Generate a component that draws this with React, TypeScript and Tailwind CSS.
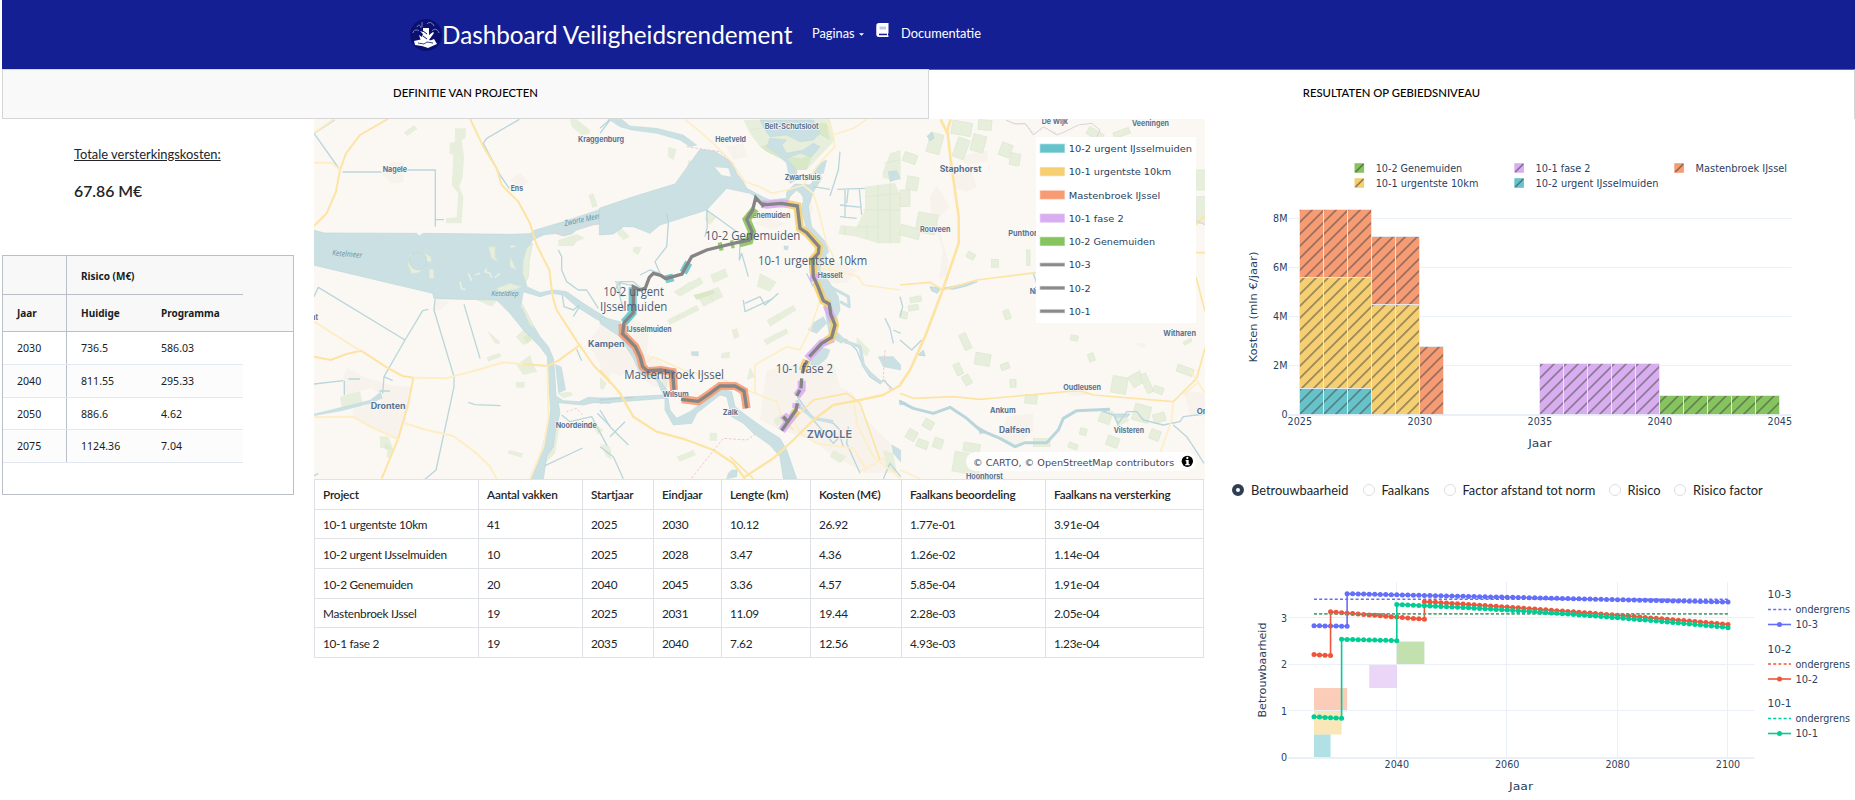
import React from "react";

const INK = "#2a3f5f";
const HATCH_COLORS = { teal: "#65c4cb", yellow: "#f5cf70", orange: "#f79b73", purple: "#d9aef1", green: "#86c45e" };

type LabelProps = {
  x: number;
  y: number;
  size: number;
  len?: number;
  anchor?: "start" | "middle" | "end";
  fill?: string;
  font?: string;
  weight?: number;
  italic?: boolean;
  halo?: number;
  transform?: string;
  children: string;
};

function Label({ x, y, size, len, anchor = "start", fill = INK, font = "DejaVu Sans, sans-serif", weight = 400, italic, halo, transform, children }: LabelProps) {
  return (
    <text
      x={x}
      y={y}
      fontSize={size}
      textLength={len}
      lengthAdjust="spacingAndGlyphs"
      textAnchor={anchor}
      fill={fill}
      fontFamily={font}
      fontWeight={weight}
      fontStyle={italic ? "italic" : undefined}
      stroke={halo ? "#fbf8f3" : undefined}
      strokeWidth={halo}
      paintOrder="stroke"
      strokeLinejoin="round"
      transform={transform}
    >
      {children}
    </text>
  );
}

const WATER = "#cbe0e3";
const CANAL = "#b9d6dc";
const GREEN = "#e7eedb";
const URBAN = "#f7f2eb";
const ROAD = "#fde4a3";
const ROAD2 = "#fdeec6";

/* name, x, y, size, width, in thirds of a pixel */
type Place = [string, number, number, number, number];

const placesWest: Place[] = [
  ["Nagele", 218, 185, 22, 73],
  ["Ens", 602, 244, 22, 37],
  ["Dronten", 182, 896, 25, 105],
  ["Noordeinde", 737, 953, 22, 123],
  ["at", 4, 630, 22, 20],
];
const placesMid: Place[] = [
  ["Kraggenburg", -66, 97, 22, 138],
  ["Kampen", -36, 711, 25, 110],
  ["Heetveld", 346, 96, 22, 92],
  ["Belt-Schutsloot", 494, 56, 22, 162],
  ["Zwartsluis", 554, 211, 22, 107],
  ["Genemuiden", 441, 324, 22, 130],
  ["Hasselt", 653, 505, 22, 75],
  ["IJsselmuiden", 80, 667, 22, 135],
  ["Wilsum", 188, 860, 22, 78],
  ["Zalk", 368, 914, 22, 46],
  ["ZWOLLE", 620, 983, 32, 136],
];
const placesEast: Place[] = [
  ["De Wijk", 425, 41, 22, 79],
  ["Veeningen", 696, 48, 22, 111],
  ["Staphorst", 119, 186, 25, 125],
  ["Rouveen", 60, 366, 22, 91],
  ["Punthorst", 325, 379, 22, 106],
  ["Nieuwleusen", 389, 553, 22, 135],
  ["Witharen", 790, 677, 22, 98],
  ["Oudleusen", 490, 839, 22, 113],
  ["Ankum", 270, 908, 22, 77],
  ["Dalfsen", 297, 969, 25, 94],
  ["Vilsteren", 641, 970, 22, 91],
  ["Ommen", 890, 912, 24, 90],
  ["Hoonhorst", 198, 1108, 22, 111],
];

function Places({ items }: { items: Place[] }) {
  return (
    <>
      {items.map(([name, x, y, size, len]) => (
        <Label key={name} x={x} y={y} size={size} len={len} weight={size > 30 ? 600 : 700} fill="#587392" font="Inter, sans-serif" halo={4}>
          {name}
        </Label>
      ))}
    </>
  );
}

function Line({ d, c, w = 6, dash }: { d: string; c: string; w?: number; dash?: string }) {
  return <path d={d} stroke={c} strokeWidth={w} strokeDasharray={dash} fill="none" strokeLinejoin="round" />;
}

function WestBase() {
  return (
    <g transform="translate(310 110) scale(.33333)">
      <path fill={URBAN} d="M110 772 160 800 240 825 308 832 285 940 262 988 170 945 130 920 130 890 100 850 100 800ZM212 190 245 155 282 157 280 218 245 220ZM375 568 420 575 390 600 370 600ZM600 210 630 190 655 215 630 235ZM835 700 870 645 900 640V820Z" />
      <path fill="#fbf8f3" d="M135 845 185 835 215 855 210 880 175 870 160 895 140 880Z" />
      <path fill={GREEN} d="M435 55 468 55 466 85 455 90 462 140 458 200 448 230 460 260 455 340 408 340 408 325 440 322 445 250 425 225 430 135 418 130 420 98 435 96ZM281 68 312 46 322 56 292 78ZM780 28 800 28 840 60 838 72 815 75 785 50ZM835 255 850 250 863 288 848 294ZM90 860 150 843 158 880 120 895 95 890ZM210 978 235 980 250 1018 238 1045 230 1040 232 1018 210 1012ZM530 742 570 728 573 740 535 755ZM530 660 570 695 568 703 555 700ZM618 680 645 655 665 690 640 705ZM620 765 660 735 668 760 682 785 640 795ZM618 816H644V833H618ZM592 1030 598 1020 638 1030 635 1043ZM745 390 800 372 825 385 800 395 790 408 745 408ZM500 570 545 590 565 570 520 568ZM740 850 780 845 790 855 760 865ZM860 945 880 960 865 975 855 960ZM740 920 750 940 735 1030 715 1050 705 1060 715 1000Z" />
      <path fill="#dfebcd" d="M640 680 655 672 665 690 650 702ZM225 1000 250 1018 225 1018Z" />
      <path fill={WATER} stroke="#bcd8dd" strokeWidth="2" d="M10 360 42 369 320 370 328 378 340 370 600 373 660 371 670 362 760 335 902 288V350L882 354 872 342 850 344 800 360 785 372 760 378 735 370 700 375 665 392 655 430 640 480 650 530 690 548 730 540 770 545 820 580 902 632V645L860 628 800 590 760 555 725 550 690 560 640 545 632 590 660 630 690 680 715 710 730 745 735 800 738 858 760 872 808 875 835 862 902 866V880L850 878 820 885 745 878 750 910 735 970 730 1010 710 1040 700 1108H662L690 1040 710 960 722 900 716 820 712 740 690 710 640 660 600 610 560 570 372 566 368 550 10 465Z" />
      <path fill={GREEN} stroke="#d8e6d5" strokeWidth="2" d="M300 435 330 428 345 432 350 440 342 470 325 488 305 490 294 465ZM345 430 362 440 365 455 350 455ZM358 478 370 476 372 505 358 505ZM535 410 555 410 555 440 565 455 545 445ZM600 440 610 460 618 480 600 470ZM560 535 600 520 635 530 620 538 570 545ZM640 450 650 415 668 400 658 450 655 500 648 515 638 490ZM635 580 660 625 672 655 660 645 640 600Z" />
      <path fill="none" stroke="#e7efe3" strokeWidth="5" d="M475 490l10 22M495 495l15-5M530 475l-5 10 15 5 5 14M570 490l-15 12M600 410l15-1M450 515l5 22 12 2" />
      <circle cx="324" cy="453" r="26" fill={WATER} stroke="#bcd8dd" strokeWidth="2" />
      <path fill={WATER} d="M10 912 180 870 212 845 218 865 185 880 95 903 10 918ZM735 762 755 770 768 840 745 850Z" />
      <Line c={CANAL} w={4} d="M74 30 12 70 90 180M98 186H214M290 180H376V350M376 329H402M12 560 25 532 285 690M355 598 338 602 285 690 222 800 218 850M222 800 248 812M375 568 372 600 432 800V830L402 970 378 1080 345 1108M462 583 510 745M475 877 495 884 572 887M12 822 100 812M103 812V855M115 807H150M208 843H240M705 1067 818 1014M598 236 570 195 520 100 530 85 628 28M870 70 900 30M745 420 755 440 755 480 770 515 805 540 830 540 865 595M757 555 762 590 790 600 808 585M790 620 808 590M800 718 815 752M862 910 900 948M755 915 780 935 845 920 902 1028M12 1098 25 1090" />
      <Line c={ROAD} d="M235 26 150 75 108 130 90 180 78 245 50 310 12 348M480 26 520 110 560 175 575 225 625 275 660 340 680 405 718 480 728 560 740 600 805 700 850 765 902 820M12 740 62 750 110 732 153 722 235 775 278 798 310 803M808 706 745 752 712 768 640 762M310 803 295 880 265 985 215 1106" />
      <Line c={ROAD2} d="M74 26 12 68M12 158H65L90 180M12 635 150 722M310 803 410 805 520 775 580 757 640 762M712 768 716 920 700 1010 660 1106M12 922 130 920 180 950 265 988M285 940 350 960 430 978 500 1030 540 1070 560 1106" />
      <Line c="#f0cfd0" w={3} dash="8 5" d="M725 372 865 342M768 906 800 895 818 915" />
      <Label x={66} y={436} size={24} len={90} italic fill="#5f93a8" font="Open Sans, sans-serif" transform="rotate(5 66 436)">Ketelmeer</Label>
      <Label x={544} y={558} size={22} len={82} italic fill="#5f93a8" font="Open Sans, sans-serif">Keteldiep</Label>
      <Label x={764} y={348} size={24} len={111} italic fill="#5f93a8" font="Open Sans, sans-serif" transform="rotate(-12 764 348)">Zwarte Meer</Label>
      <Places items={placesWest} />
    </g>
  );
}

function MidBase() {
  return (
    <g transform="translate(600 110) scale(.33333)">
      <path fill={URBAN} d="M0 690 40 640 90 620 150 650 140 730 220 780 215 830 160 830 90 780 60 800 0 770ZM600 230 630 245 640 300 620 330 590 260ZM660 470 710 455 770 480 740 520 680 520ZM490 850 500 780 560 770 640 740 700 760 720 830 760 850 800 930 870 1000 890 1090 800 1090 700 1040 640 990 540 960 480 930ZM460 340 500 325 560 340 520 360ZM380 110 430 100 440 140 400 150Z" />
      <path fill={GREEN} d="M430 30 690 28 705 90 620 180 580 180 540 130 480 110 450 70ZM205 110 230 118 220 150 203 140ZM265 150 295 158 280 175 262 168ZM847 190 870 130 902 120V210L850 205ZM795 230 885 218 902 260V400L835 400 770 380 715 372 722 345 770 350 795 300ZM220 545 300 500 310 520 240 560ZM200 630 290 585 298 600 210 645ZM290 555 355 530 370 560 310 590ZM330 495 375 475 385 500 340 520ZM500 630 580 585 590 600 510 650ZM490 690 560 655 565 670 500 705ZM395 660 412 655 418 680 402 688ZM480 490 530 515 510 545 470 530ZM230 1040 280 1020 288 1035 240 1055ZM330 968 352 968 350 992 328 992ZM450 770 465 800 440 810ZM365 730 390 725 388 745 362 745ZM100 410 125 410 115 435 98 425ZM320 300 350 320 330 345 315 330ZM60 350 90 380 70 390 50 370ZM180 790 205 800 200 850 190 840ZM520 930 545 910 560 930 530 950ZM850 1020 880 1030 890 1090 860 1080ZM0 1000 30 1010 35 1050 20 1040ZM770 680 810 720 800 740 770 710ZM700 1020 740 1040 720 1060 690 1040ZM0 800 20 820 10 840 0 835Z" />
      <path fill="none" stroke="#dae7d3" strokeWidth="2" d="M795 260 900 250M790 300 900 300M770 350 835 350 835 400M835 225V350M870 220V400M735 348V375M800 350V385M850 160 900 150M450 60 500 50M600 150 650 120M240 540 270 515M230 630 240 615M320 545 340 575M530 615 540 632" />
      <path fill="#d9e8c6" d="M480 110 540 90 560 140 610 145 640 130 620 180 585 180 550 150 500 125ZM630 40 680 40 690 90 650 70ZM280 555 340 540 345 550 290 570Z" />
      <path fill={WATER} stroke="#bcd8dd" strokeWidth="2" d="M-2 295 100 260 225 222 300 118 345 124 400 160 410 190 430 215 440 235 490 262 510 270 560 265 560 245 585 222 630 225 660 190 665 205 640 245 625 290 635 350 680 400 685 425 665 455 660 480 690 520 715 560 720 600 705 630 700 660 730 690 725 700 690 680 680 630 670 560 650 520 645 470 668 425 665 405 620 360 605 300 610 260 590 240 570 260 560 282 500 285 450 250 380 235 320 300 180 345 150 370 100 350 70 350 40 372-2 375Z" />
      <path fill="#fbf8f3" d="M345 172 385 175 393 200 365 195ZM570 262 600 248 610 275 590 285 570 280Z" />
      <path fill={WATER} stroke="#bcd8dd" strokeWidth="1.5" d="M26 28 65 28 90 48 170 55 250 75 290 105 270 110 240 90 170 70 95 60 60 50ZM480 30 640 30 660 70 640 90 600 95 560 75 510 80 495 60ZM510 85 560 90 545 105 560 130 610 120 640 100 660 110 635 140 600 130 560 145 590 180 590 210 570 220 560 160 530 130 500 110ZM640 190 660 160 680 150 670 190ZM865 185 890 182 900 205 870 215ZM638 640 670 620 680 640 650 670 625 660ZM635 740 660 710 690 720 680 745 655 765 632 765ZM835 740 880 740 902 765V780L850 770ZM875 1005 902 1020V1055L880 1030ZM552 408 565 408 563 420 552 418ZM275 725 295 725 295 738 275 736ZM395 1080 412 1080 410 1100 380 1106 385 1090Z" />
      <path fill={WATER} stroke="#bcd8dd" strokeWidth="2" d="M0 640 0 620 60 635 75 660 115 710 130 770 165 790 200 840 210 900 230 925 270 905 330 860 360 835 395 845 405 890 450 925 500 960 540 985 560 1020 590 1106 550 1106 540 1040 510 1005 460 970 430 940 395 920 380 860 360 855 290 910 275 940 220 945 195 900 195 865 0 880 0 865 190 855 170 810 120 790 100 745 60 680Z" />
      <Line c={CANAL} w={4} d="M0 55 30 28M0 870 100 862M200 310 205 340 200 410 165 455 180 490M320 300 322 350 315 380M320 300 410 365M420 400 418 450 425 430 445 500M180 490 150 480 120 495M45 515 110 530 95 540M0 900 30 950 85 1005M30 980 75 935M0 1010 40 1040 70 1106M430 570 435 605 520 565M435 580 480 560 495 585 535 550M720 125 715 180 690 258M640 230 690 238M712 238 795 235M745 235 740 280M778 238 785 315M720 285 785 292M720 320 770 325M735 240 735 325M855 625 870 655 880 700M880 660 902 670M710 680 740 690 770 720 790 770 810 800M810 785 810 800 840 820 850 810 880 840M620 490 640 530M592 860 620 900 640 925 700 940 720 960M60 520 60 560 70 600 50 520M640 930 700 1000 720 980 730 1010M745 950 740 1000 780 1090M850 1106 870 1060 902 1100M45 540 60 515 100 515 130 540M45 540 70 560" />
      <Line c={WATER} w={10} d="M705 665 735 695 780 710 790 765 810 790 845 820M590 870 600 890 640 925 700 935" />
      <Line c={WATER} w={9} d="M690 530 745 560 748 590 720 575" />
      <Line c={ROAD2} w={5} d="M255 28 300 65 340 100 390 150 435 215 480 230 515 250 560 240 610 225 640 250 655 300 680 400 700 440 690 475 655 460M700 75 704 110 650 170 610 225M680 28 700 75 760 55 800 28M660 475 700 480 775 500 790 525 902 540M640 530 660 570 630 660 600 720 560 710 465 765 465 850M465 850 530 875 545 920 580 930 602 970 650 1000 760 1015 800 1080M465 850 370 810 250 780 160 740 130 765M760 860 770 940 820 1040 902 1106M780 1085 860 1040" />
      <Line c={ROAD} w={7} d="M0 780 60 850 100 920 170 965 260 990 340 1020 400 1060 435 1106M435 1100 520 1045 580 990 640 930 700 885 780 870 850 855 902 825" />
      <Line c={ROAD} w={5} d="M390 1040 460 1106M550 960 640 870 740 850 780 880 840 1050M545 925 580 960" />
      <Line c="#efc9cb" w={3} dash="8 5" d="M275 1104 310 1060 370 985 440 990 470 970M260 110 360 125 400 165 M855 720 850 800 870 840" />
      <Places items={placesMid} />
    </g>
  );
}

const fields: [number, number, number, number, number][] = [
  [10, 130, 40, 28, 20], [20, 200, 34, 40, 10], [0, 240, 30, 50, 0], [50, 310, 60, 60, 10], [0, 350, 60, 32, 15], [85, 70, 40, 60, 15],
  [155, 35, 60, 40, 10], [165, 85, 36, 60, 20], [215, 75, 40, 50, 15], [235, 30, 40, 30, 5], [300, 100, 34, 40, 20], [330, 130, 30, 36, 10],
  [200, 428, 25, 18, 30], [275, 448, 20, 24, 0], [380, 420, 10, 46, 0], [312, 600, 18, 28, -20], [185, 670, 22, 50, -25], [165, 760, 20, 36, -25],
  [225, 730, 46, 36, 10], [190, 795, 22, 30, -30], [302, 760, 26, 18, -20], [330, 808, 18, 24, 0], [565, 730, 18, 24, -20], [512, 676, 22, 16, 10],
  [375, 855, 36, 26, 5], [635, 800, 46, 50, 10], [690, 790, 40, 36, -30], [730, 790, 20, 60, -25], [760, 830, 30, 20, 20], [700, 885, 50, 50, 15],
  [600, 900, 34, 40, 20], [760, 910, 36, 26, -15], [830, 770, 50, 22, 20], [70, 930, 30, 26, 30], [20, 960, 30, 30, 30], [50, 990, 34, 24, 20],
  [100, 985, 28, 30, 20], [190, 1000, 50, 26, 10], [160, 1030, 80, 60, 10], [400, 985, 50, 24, 0], [540, 955, 20, 20, 15], [505, 1000, 28, 16, 20],
  [560, 60, 50, 24, 30], [640, 60, 50, 18, -20], [30, 560, 34, 16, -10], [25, 585, 30, 16, -10], [0, 605, 22, 20, 10], [890, 180, 30, 60, 0],
  [888, 260, 30, 80, 0], [750, 960, 30, 30, 20], [620, 980, 36, 30, 20], [850, 690, 26, 10, -30],
];

function EastBase() {
  return (
    <g transform="translate(900 110) scale(.33333)">
      <path fill={URBAN} d="M160 195 215 180 230 230 200 245 165 235ZM110 225 150 290 110 330 130 400 140 490 120 515 130 430 95 320 90 260ZM180 140 265 120 260 155 200 165ZM320 920 400 910 400 960 350 1015 300 980ZM500 850 560 840 560 855 520 860ZM850 840 915 850V920L870 915ZM130 400 145 450 140 500 118 500ZM700 700 740 700 730 715Z" />
      <g fill={GREEN} stroke="#dbe8d2" strokeWidth="2">
        {fields.map(([x, y, w, h, r]) => (
          <rect key={`${x}-${y}`} x={x} y={y} width={w} height={h} transform={`rotate(${r} ${x + w / 2} ${y + h / 2})`} />
        ))}
      </g>
      <path fill={WATER} stroke="#b4d2da" strokeWidth="2" d="M82 78 96 68 102 85 90 92ZM90 530 122 535 112 550 95 542ZM130 535 200 520 232 515 200 528 160 538ZM55 735 70 720 75 738ZM235 950 260 965 240 972ZM640 912 690 912 655 950ZM-2 870 20 880 0 885Z" />
      <path fill={GREEN} d="M648 925 680 922 688 932 658 948Z" />
      <Line c={CANAL} w={9} d="M0 875 40 895 100 910 150 892 200 925 240 960 300 985 345 1010 375 998 440 998 475 960 490 925 530 902 630 898" />
      <Line c={CANAL} w={4} d="M630 898 610 905 640 915 655 940 680 905 710 905 730 930 790 945 840 935 850 920 915 912M0 690 35 720 65 690M0 560 8 590 0 620M820 945 860 980 880 1010 912 1060M400 490 410 520" />
      <Line c={ROAD} w={8} d="M152 28 142 60 152 150 176 320 176 400 128 540 75 680 30 780 0 825M122 28 142 70" />
      <Line c={ROAD} w={5} d="M0 525 90 517 128 540 230 510 408 488M0 850 40 865 160 860 240 868 500 845 540 842 580 855 820 875 890 805 915 715M888 500 915 605M888 345 915 315M888 428H915" />
      <Line c={ROAD2} w={5} d="M820 875 815 930 770 1060M890 820 850 855M0 1080 60 1106M870 780 915 850" />
      <Line c="#d9d3db" w={3} d="M318 30 345 42 375 40 400 75 430 50 470 75 495 65 535 45 575 40 600 60 590 80M886 330 915 345" />
      <Line c="#e5d5da" w={3} dash="8 4" d="M320 32 348 42 378 42 402 72 432 52 472 72" />
      <Places items={placesEast} />
    </g>
  );
}

const WEST_TRACK =
  "M492 290 467 263 458 300 440 328 456 365 448 390 400 400 320 420 275 440 255 475 246 492 197 506 182 496 160 490 148 502 136 534 120 540 100 530 100 608 72 638 68 672 106 710 120 740 128 770 142 782 182 780 218 786 222 840M243 868 295 874 330 850 360 828 405 828 432 843 440 895";
const EAST_TRACK =
  "M487 282 500 284 545 280 592 288 600 355 620 368 657 410 655 430 638 448 640 500 654 530 670 572 688 582 692 612 705 645 695 682 665 700 628 740M622 752 612 770 607 790M605 805 603 835M600 840 590 858M592 880 588 900 545 962M550 920 562 934";

function Routes() {
  return (
    <g transform="translate(600 110) scale(.33333)" fill="none" strokeWidth="24" strokeOpacity=".9">
      <path stroke="#86c45e" d="M466 296 440 328 456 365 448 392 418 400M402 402 392 404M368 408 356 411" />
      <path stroke="#65c4cb" d="M266 458 250 488M220 502 196 508M98 532V608L72 638" />
      <path stroke="#f79b73" d="M68 642V672L106 710 120 740 128 770 142 784 182 780 218 786 222 840M246 868 295 874 330 850 360 828 405 828 432 843 440 895" />
      <path stroke="#d9aef1" d="M484 282 500 284 545 280 565 282M642 490V515M680 585 700 635M700 685 665 700 622 746M605 812V838L590 858M590 880 588 895M588 905 545 962M565 935 550 915" />
      <path stroke="#f5cf70" d="M562 282 592 288 600 355 620 368 657 410 655 430 638 448 640 490M648 515 654 530 670 572 688 582M700 625 705 645 695 682 678 692M620 750 612 770 607 782M592 900 580 914" />
      <path stroke="#858585" strokeWidth="10" strokeOpacity="1" d={WEST_TRACK + EAST_TRACK} />
    </g>
  );
}

const legendRows: [string, string, number, number][] = [
  ["10-2 urgent IJsselmuiden", "#65c4cb", 24, 370],
  ["10-1 urgentste 10km", "#f5cf70", 24, 308],
  ["Mastenbroek IJssel", "#f79b73", 24, 275],
  ["10-1 fase 2", "#d9aef1", 24, 165],
  ["10-2 Genemuiden", "#86c45e", 24, 259],
  ["10-3", "#8b8b8b", 8, 66],
  ["10-2", "#8b8b8b", 8, 66],
  ["10-1", "#8b8b8b", 8, 66],
];

function ProjectMap() {
  return (
    <svg className="block h-[360px] w-[891px] bg-[#fbf8f3]" viewBox="314 119 891 360">
      <WestBase />
      <MidBase />
      <EastBase />
      <Routes />
      <g transform="translate(600 110) scale(.33333)">
        {(
          [
            ["10-2 Genemuiden", 315, 390, 286],
            ["10-1 urgentste 10km", 474, 465, 328],
            ["10-2 urgent", 10, 558, 182],
            ["IJsselmuiden", 0, 602, 202],
            ["Mastenbroek IJssel", 73, 806, 299],
            ["10-1 fase 2", 527, 790, 172],
          ] as [string, number, number, number][]
        ).map(([t, x, y, len]) => (
          <Label key={t} x={x} y={y} size={37} len={len} font="Open Sans, sans-serif" fill="#4d5d78">
            {t}
          </Label>
        ))}
      </g>
      <g transform="translate(900 110) scale(.33333)">
        <rect x="408" y="81" width="480" height="558" fill="#fff" />
        {legendRows.map(([t, c, h, len], i) => (
          <g key={t + i} transform={`translate(0 ${115 + i * 69.8})`}>
            <rect x="421" y={-h / 2} width="72" height={h} fill={c} stroke={c} strokeOpacity=".5" strokeWidth="4" />
            <Label x={506} y={11} size={28} len={len}>
              {t}
            </Label>
          </g>
        ))}
        <rect x="198" y="1026" width="690" height="57" rx="28" fill="#fff" fillOpacity=".85" />
        <Label x={219} y={1067} size={27} len={604} fill="#474b57">
          © CARTO, © OpenStreetMap contributors
        </Label>
        <circle cx="862" cy="1054" r="17" fill="#000" />
        <path d="M857 1050H866V1062H869V1066H856V1062H859V1054H857Z" fill="#fff" />
        <circle cx="862" cy="1044" r="3.4" fill="#fff" />
      </g>
    </svg>
  );
}

type Tone = keyof typeof HATCH_COLORS;

/* first year, number of years, top, bottom */
const bars: [Tone, number, number, number, number][] = [
  ["teal", 2025, 3, 388.5, 414.5],
  ["yellow", 2025, 3, 277.5, 388.5],
  ["orange", 2025, 3, 209.5, 277.5],
  ["yellow", 2028, 2, 304.5, 414.5],
  ["orange", 2028, 2, 236.5, 304.5],
  ["orange", 2030, 1, 346.5, 414.5],
  ["purple", 2035, 5, 363.5, 414.5],
  ["green", 2040, 5, 395.5, 414.5],
];

const costLegend: [string, Tone, number, number, number][] = [
  ["10-2 Genemuiden", "green", 1354.5, 168, 86.5],
  ["10-1 urgentste 10km", "yellow", 1354.5, 183, 102.7],
  ["10-1 fase 2", "purple", 1514.3, 168, 55],
  ["10-2 urgent IJsselmuiden", "teal", 1514.3, 183, 123],
  ["Mastenbroek IJssel", "orange", 1674.3, 168, 91.6],
];

function CostChart() {
  return (
    <svg className="block h-[341px] w-[635px]" viewBox="1220 119 635 341">
      <defs>
        {(Object.keys(HATCH_COLORS) as Tone[]).map((k) => (
          <pattern key={k} id={`hatch-${k}`} x="10" width="12" height="12" patternUnits="userSpaceOnUse">
            <rect width="12" height="12" fill={HATCH_COLORS[k]} />
            <path d="M-3 3 3-3M-3 15 15-3M9 15 15 9" stroke="#444" strokeOpacity=".5" strokeWidth="1.8" />
          </pattern>
        ))}
      </defs>
      {[0, 2, 4, 6, 8].map((v) => (
        <g key={v}>
          <rect x="1288" y={Math.round(414.7 - v * 24.5) - 1} width="503.5" height={v ? 1 : 2} fill="#ebf0f8" />
          <Label x={1287.5} y={418 - v * 24.5} size={9.6} anchor="end">
            {v ? `${v}M` : "0"}
          </Label>
        </g>
      ))}
      {bars.map(([tone, year, n, top, bottom]) =>
        Array.from({ length: n }, (_, i) => (
          <rect key={`${tone}${year}${i}`} x={1299.5 + (year - 2025 + i) * 24} y={top} width="24" height={bottom - top} fill={`url(#hatch-${tone})`} stroke="#e5ecf6" strokeOpacity=".85" strokeWidth="1" />
        )),
      )}
      {[2025, 2030, 2035, 2040, 2045].map((y) => (
        <Label key={y} x={1299.8 + (y - 2025) * 24} y={424.8} size={9.6} anchor="middle">
          {String(y)}
        </Label>
      ))}
      {costLegend.map(([t, tone, x, y, len]) => (
        <g key={t}>
          <rect x={x} y={y - 4.8} width="9.6" height="9.6" fill={HATCH_COLORS[tone]} />
          <path d={`M${x + 1} ${y + 4}l8-8`} stroke="#444" strokeOpacity=".6" strokeWidth="1.7" />
          <Label x={x + 21.2} y={y + 3.9} size={9.6} len={len}>
            {t}
          </Label>
        </g>
      ))}
      <Label x={1540} y={446.7} size={10.4} len={23.7} anchor="middle">
        Jaar
      </Label>
      <Label x={1256.5} y={307} size={10.4} len={111} anchor="middle" transform="rotate(-90 1256.5 307)">
        Kosten (mln €/jaar)
      </Label>
    </svg>
  );
}

const px = (year: number) => 1314 + (year - 2025) * 5.52;
const py = (v: number) => 757.7 - v * 46.45;

type Segment = [number, number, number, number, number?];
/* from year, to year, start value, end value, sag */
const series: { color: string; limit: number; segments: Segment[] }[] = [
  { color: "#636efa", limit: 3.41, segments: [[2025, 2031, 2.84, 2.83], [2031, 2100, 3.53, 3.35]] },
  { color: "#ef553b", limit: 3.1, segments: [[2025, 2028, 2.22, 2.2], [2028, 2045, 3.14, 2.98], [2045, 2100, 3.36, 2.87, 0.02]] },
  { color: "#00cc96", limit: 3.1, segments: [[2025, 2030, 0.88, 0.85], [2030, 2040, 2.55, 2.52], [2040, 2100, 3.3, 2.8, 0.05]] },
];

function points(segments: Segment[]) {
  return segments.flatMap(([a, b, va, vb, sag = 0]) =>
    Array.from({ length: b - a + 1 }, (_, i) => {
      const t = i / (b - a);
      return [px(a + i), py(va + (vb - va) * t + 4 * sag * t * (1 - t))];
    }),
  );
}

const phases: [Tone, number, number, number][] = [
  ["teal", 2025, 2028, 0],
  ["yellow", 2025, 2030, 0.5],
  ["orange", 2025, 2031, 1],
  ["purple", 2035, 2040, 1.5],
  ["green", 2040, 2045, 2],
];

function ReliabilityChart() {
  return (
    <svg className="block h-[280px] w-[635px]" viewBox="1220 520 635 280">
      {[2040, 2060, 2080, 2100].map((y) => (
        <g key={y}>
          <rect x={Math.round(px(y)) - 1} y="582" width="1" height="176" fill="#ebf0f8" />
          <Label x={px(y)} y={768} size={9.6} anchor="middle">
            {String(y)}
          </Label>
        </g>
      ))}
      {phases.map(([tone, a, b, v]) => (
        <rect key={tone} x={px(a)} y={py(v + 0.5)} width={px(b) - px(a)} height={py(v) - py(v + 0.5)} fill={HATCH_COLORS[tone]} fillOpacity=".5" />
      ))}
      {[0, 1, 2, 3].map((v) => (
        <g key={v}>
          <rect x="1288" y={Math.round(py(v)) - 1} width="466.5" height={v ? 1 : 2} fill="#ebf0f8" />
          <Label x={1287} y={py(v) + 3.5} size={9.6} anchor="end">
            {String(v)}
          </Label>
        </g>
      ))}
      {series.map(({ color, limit, segments }) => {
        const pts = points(segments);
        return (
          <g key={color}>
            <path d={`M1314 ${py(limit)}H1728`} stroke={color} strokeWidth="1.6" strokeDasharray="3 2.2" />
            <polyline points={pts.map((p) => p.join(",")).join(" ")} fill="none" stroke={color} strokeWidth="1.6" />
            {pts.map(([x, y], i) => (
              <circle key={i} cx={x} cy={y} r="2.5" fill={color} />
            ))}
          </g>
        );
      })}
      {series.map(({ color }, i) => {
        const y = 594.5 + i * 54.5;
        const name = ["10-3", "10-2", "10-1"][i];
        return (
          <g key={name}>
            <Label x={1767.5} y={y + 3.5} size={9.6} len={24}>
              {name}
            </Label>
            <path d={`M1768 ${y + 15}H1791`} stroke={color} strokeWidth="1.6" strokeDasharray="3 2.2" />
            <Label x={1795.5} y={y + 18.5} size={9.6} len={54.5}>
              ondergrens
            </Label>
            <path d={`M1768 ${y + 30}H1791`} stroke={color} strokeWidth="1.6" />
            <circle cx="1779.5" cy={y + 30} r="2.5" fill={color} />
            <Label x={1795.5} y={y + 33.5} size={9.6} len={22.5}>
              {name}
            </Label>
          </g>
        );
      })}
      <Label x={1521} y={789.6} size={10.4} len={24} anchor="middle">
        Jaar
      </Label>
      <Label x={1266} y={670} size={10.4} len={95} anchor="middle" transform="rotate(-90 1266 670)">
        Betrouwbaarheid
      </Label>
    </svg>
  );
}

function Logo() {
  return (
    <svg className="h-8 w-8" viewBox="0 0 32 32">
      <circle cx="16" cy="16" r="16" fill="#0a0f70" />
      <path d="M3 14c0-3 4-4 6-2M7 8c1-3 4-2 4 1M17 5c2-3 6-1 7 2M22 12c2-3 6-2 7 2M12 3v5" stroke="#7d84c4" strokeWidth="1" fill="none" />
      <path d="M13 9h6v7l4-3 1 1-5 7 3 1-6 3-5-3-2-6 3 2 1-3-3-3 3 1Z" fill="#fff" />
      <path d="M13 12l4 3M13 17l4 3" stroke="#0a0f70" strokeWidth="1" />
      <path d="M4 22l9-2 4 3 7-3 3 5-9 4-6-2-7-1Z" fill="#fff" />
      <path d="M8 24l6 1 3-2 6 1" stroke="#0a0f70" strokeWidth=".8" fill="none" />
    </svg>
  );
}

const riskRows = [
  ["2030", "736.5", "586.03"],
  ["2040", "811.55", "295.33"],
  ["2050", "886.6", "4.62"],
  ["2075", "1124.36", "7.04"],
];

function RiskTable() {
  return (
    <div className="h-[240px] w-[292px] border border-[#babfc7] font-['Noto_Sans'] text-[10.6px] text-[#181d1f]">
      <div className="h-[76px] border-b border-[#babfc7] bg-[#f8f8f8] text-[10px] font-bold">
        <div className="flex h-[39px] w-[240px] border-b border-[#babfc7]">
          <div className="w-16 border-r border-[#babfc7]" />
          <div className="flex items-center pl-[14px] pt-0.5">Risico (M€)</div>
        </div>
        <div className="flex h-[36px] w-[240px] items-stretch">
          <div className="flex w-16 items-center border-r border-[#babfc7] pl-[14px]">Jaar</div>
          <div className="flex w-20 items-center pl-[14px]">Huidige</div>
          <div className="flex w-20 items-center pl-[14px]">Programma</div>
        </div>
      </div>
      {riskRows.map((r, i) => (
        <div key={r[0]} className={`flex w-[240px] border-b border-[#e3e7ef] ${i === 2 ? "h-8" : "h-[33px]"} ${i % 2 ? "bg-[#fcfcfc]" : "bg-white"}`}>
          <div className="flex w-16 items-center border-r border-[#babfc7] pl-[14px] pt-0.5">{r[0]}</div>
          <div className="flex w-20 items-center pl-[14px] pt-0.5">{r[1]}</div>
          <div className="flex w-20 items-center pl-[14px] pt-0.5">{r[2]}</div>
        </div>
      ))}
    </div>
  );
}

const columns: [string, string][] = [
  ["Project", "w-[164px]"],
  ["Aantal vakken", "w-[104px]"],
  ["Startjaar", "w-[71px]"],
  ["Eindjaar", "w-[68px]"],
  ["Lengte (km)", "w-[89px]"],
  ["Kosten (M€)", "w-[91px]"],
  ["Faalkans beoordeling", "w-[144px]"],
  ["Faalkans na versterking", "w-[158px]"],
];
const projects = [
  ["10-1 urgentste 10km", "41", "2025", "2030", "10.12", "26.92", "1.77e-01", "3.91e-04"],
  ["10-2 urgent IJsselmuiden", "10", "2025", "2028", "3.47", "4.36", "1.26e-02", "1.14e-04"],
  ["10-2 Genemuiden", "20", "2040", "2045", "3.36", "4.57", "5.85e-04", "1.91e-04"],
  ["Mastenbroek IJssel", "19", "2025", "2031", "11.09", "19.44", "2.28e-03", "2.05e-04"],
  ["10-1 fase 2", "19", "2035", "2040", "7.62", "12.56", "4.93e-03", "1.23e-04"],
];
const rowHeights = ["h-[29px]", "h-[30px]", "h-[30px]", "h-[29px]", "h-[30px]"];

function ProjectTable() {
  return (
    <table className="w-[890px] table-fixed border-collapse text-[11.8px] leading-4 text-[#212529]">
      <thead>
        <tr className="h-[30px]">
          {columns.map(([c, w]) => (
            <th key={c} className={`${w} border border-[#dee2e6] p-0 pl-2 text-left font-semibold tracking-[-0.2px] whitespace-nowrap`}>
              {c}
            </th>
          ))}
        </tr>
      </thead>
      <tbody>
        {projects.map((row, i) => (
          <tr key={row[0]} className={rowHeights[i]}>
            {row.map((cell, j) => (
              <td key={j} className="border border-[#dee2e6] p-0 pt-0.5 pl-2 tracking-[-0.28px] whitespace-nowrap">
                {cell}
              </td>
            ))}
          </tr>
        ))}
      </tbody>
    </table>
  );
}

const metrics: [string, string][] = [
  ["Betrouwbaarheid", "w-[130.5px]"],
  ["Faalkans", "w-[81px]"],
  ["Factor afstand tot norm", "w-[165px]"],
  ["Risico", "w-[65.5px]"],
  ["Risico factor", "w-[100px]"],
];

export default function App() {
  return (
    <div className="h-[800px] w-[1855px] overflow-hidden bg-white font-['Lato'] text-[#212529]">
      <header className="ml-0.5 flex h-[69px] items-center bg-[#141f94] pl-[408px] text-white">
        <Logo />
        <span className="w-[370px] text-[24.25px] leading-8 whitespace-nowrap">Dashboard Veiligheidsrendement</span>
        <span className="flex w-[64px] items-center gap-1 pb-0.5 text-[12.8px]">
          Paginas
          <svg className="mt-0.5 h-[3px] w-[5px]" viewBox="0 0 6 3">
            <path d="M0 0H6L3 3Z" fill="#fff" />
          </svg>
        </span>
        <svg className="mb-2.5 h-[14px] w-[13px]" viewBox="0 0 13 14">
          <path d="M3 0H12.500V10.500H12V12.500H12.500V14H3A2.700 2.700 0 0 1 .3 11.300V2.700A2.700 2.700 0 0 1 3 0Z" fill="#fff" />
          <path d="M3.600 3.500H10V6.500H3.600Z" fill="#c3c6ee" />
          <path d="M3 10.700H11V12.200H3Z" fill="#141f94" />
        </svg>
        <span className="pb-0.5 pl-3 text-[12.8px]">Documentatie</span>
      </header>
      <nav className="ml-0.5 flex h-[50px] text-[11.3px] font-medium text-black">
        <div className="flex w-[927px] items-center justify-center border border-[#d6d6d6] bg-[#f9f9f9] pb-px">DEFINITIE VAN PROJECTEN</div>
        <div className="flex flex-1 items-center justify-center border-t border-r border-t-[#1975fa] border-r-[#d6d6d6] pb-0.5">RESULTATEN OP GEBIEDSNIVEAU</div>
      </nav>
      <main className="flex">
        <section className="w-[314px] pl-0.5">
          <div className="flex h-[136px] flex-col pt-[25px] pl-[72px]">
            <span className="text-[12.9px] leading-5 underline">Totale versterkingskosten:</span>
            <span className="pt-[15px] text-[15.8px] leading-6 font-semibold">67.86 M€</span>
          </div>
          <RiskTable />
        </section>
        <section className="w-[906px]">
          <ProjectMap />
          <ProjectTable />
        </section>
        <section className="w-[635px]">
          <CostChart />
          <div className="flex h-[60px] items-center pt-px pl-3 text-[12.85px]">
            {metrics.map(([m, w], i) => (
              <label key={m} className={`flex ${w} shrink-0 items-center gap-[7px] whitespace-nowrap`}>
                <span className={`h-3 w-3 shrink-0 rounded-full bg-white ${i ? "border border-[#dcdfe3]" : "border-4 border-[#2f3e55]"}`} />
                {m}
              </label>
            ))}
          </div>
          <ReliabilityChart />
        </section>
      </main>
    </div>
  );
}
